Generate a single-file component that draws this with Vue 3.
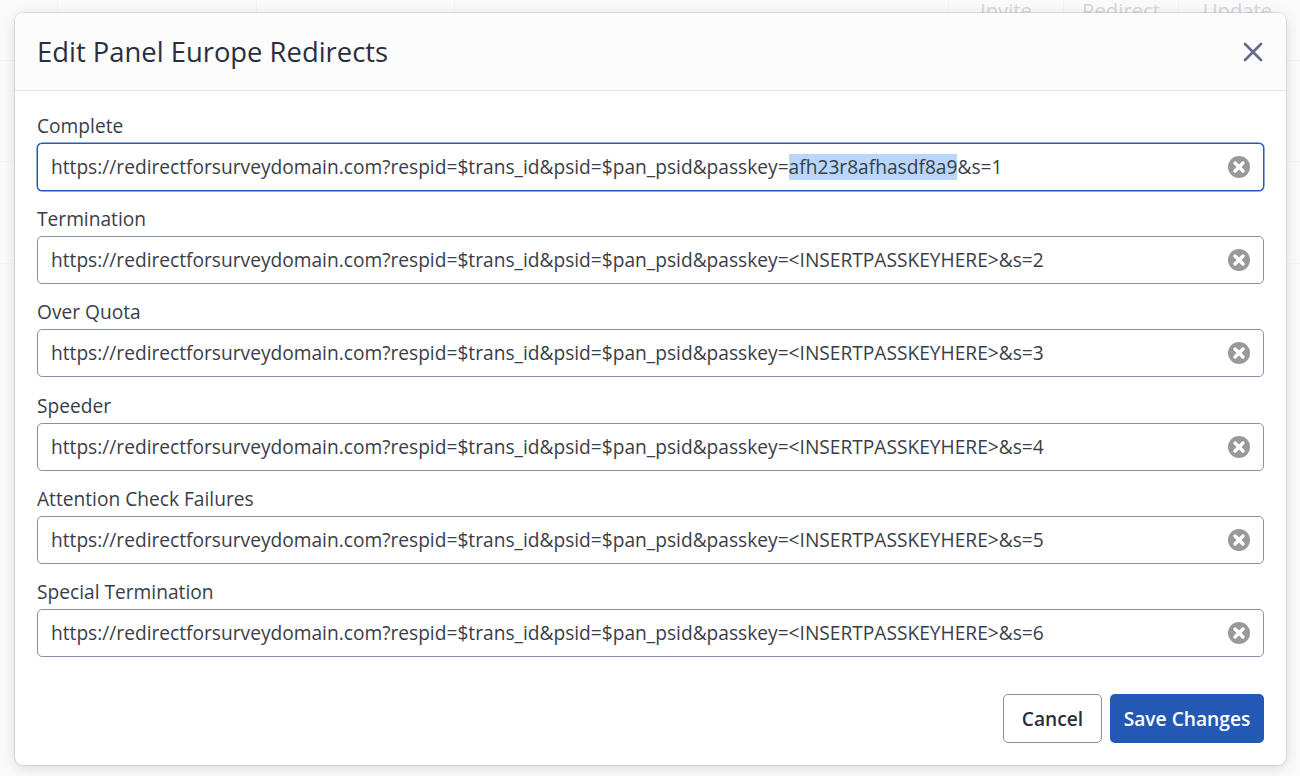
<template>
	<div class="page">
		<div class="page-bg">
			<div class="bg-row bg-row-head">
				<span class="bg-cell bg-first"></span>
				<span class="bg-cell bg-second"></span>
				<span class="bg-cell bg-third"></span>
				<span class="bg-cell bg-fill"></span>
				<span class="bg-cell bg-action">Invite</span>
				<span class="bg-cell bg-action">Redirect</span>
				<span class="bg-cell bg-last">Update</span>
			</div>
			<div class="bg-row bg-row-one"></div>
			<div class="bg-row bg-row-two"></div>
		</div>

		<div class="modal">
			<header class="modal-header">
				<h2 class="modal-title">Edit Panel Europe Redirects</h2>
				<button class="close-btn" type="button" aria-label="Close">
					<svg width="20" height="20" viewBox="0 0 20 20" fill="none">
						<path d="M2 2L18 18M18 2L2 18" stroke="#626b88" stroke-width="2.6" stroke-linecap="round" />
					</svg>
				</button>
			</header>

			<div class="modal-body">
				<div v-for="field in fields" :key="field.label" class="field">
					<label class="field-label">{{ field.label }}</label>
					<div class="field-input" :class="{ focused: field.selected }">
						<span class="field-value">{{ base }}<span v-if="field.selected" class="selected">{{ field.selected }}</span><template v-else>&lt;INSERTPASSKEYHERE&gt;</template>&amp;s={{ field.code }}</span>
						<svg class="clear-icon" width="22" height="22" viewBox="0 0 22 22">
							<circle cx="11" cy="11" r="11" fill="#999999" />
							<path d="M7 7L15 15M15 7L7 15" stroke="#ffffff" stroke-width="3.4" stroke-linecap="round" />
						</svg>
					</div>
				</div>
			</div>

			<footer class="modal-footer">
				<button class="btn btn-cancel" type="button">Cancel</button>
				<button class="btn btn-save" type="button">Save Changes</button>
			</footer>
		</div>
	</div>
</template>

<script setup>
const base = 'https://redirectforsurveydomain.com?respid=$trans_id&psid=$pan_psid&passkey=';

const fields = [
	{ label: 'Complete', code: 1, selected: 'afh23r8afhasdf8a9' },
	{ label: 'Termination', code: 2 },
	{ label: 'Over Quota', code: 3 },
	{ label: 'Speeder', code: 4 },
	{ label: 'Attention Check Failures', code: 5 },
	{ label: 'Special Termination', code: 6 },
];
</script>

<style>
html,
body {
	margin: 0;
	height: 100%;
	overflow: hidden;
}
</style>

<style scoped>
.page {
	position: relative;
	width: 1300px;
	height: 776px;
	overflow: hidden;
	background: #fafafb;
	font-family: 'Open Sans', 'Liberation Sans', sans-serif;
}

.bg-row {
	display: flex;
	border-bottom: 1px solid #f4f4f6;
}

.bg-row-head {
	height: 60px;
}

.bg-row-one {
	height: 100px;
}

.bg-row-two {
	height: 101px;
}

.bg-cell {
	flex: none;
	border-right: 1px solid #f4f4f6;
	box-sizing: border-box;
	color: #d6d7db;
	font-size: 20.3px;
	line-height: 20px;
	text-align: center;
}

.bg-first {
	width: 58px;
}

.bg-second {
	width: 199px;
}

.bg-third {
	width: 198px;
}

.bg-fill {
	width: 494px;
}

.bg-action {
	width: 115px;
}

.bg-last {
	width: 117px;
	border-right: 0;
}

.modal {
	position: absolute;
	top: 13px;
	left: 15px;
	width: 1271px;
	height: 752px;
	display: flex;
	flex-direction: column;
	background: #ffffff;
	border-radius: 8px;
	box-shadow: 0 0 0 1px rgba(0, 0, 0, 0.09), 0 3px 14px rgba(0, 0, 0, 0.13);
}

.modal-header {
	display: flex;
	align-items: center;
	justify-content: space-between;
	height: 77px;
	padding: 0 23px 0 22px;
	background: #fcfcfc;
	border-bottom: 1px solid #e6e6e6;
	border-radius: 8px 8px 0 0;
}

.modal-title {
	margin: 0;
	color: #2b2f3d;
	font-size: 27.4px;
	font-weight: 400;
}

.close-btn {
	display: flex;
	padding: 0;
	border: 0;
	background: none;
}

.modal-body {
	display: flex;
	flex-direction: column;
	gap: 16.2px;
	padding: 23px 22px 0;
}

.field {
	display: flex;
	flex-direction: column;
	gap: 5px;
}

.field-label {
	color: #3a3d48;
	font-size: 19.17px;
	line-height: 24px;
}

.field-input {
	display: flex;
	align-items: center;
	justify-content: space-between;
	box-sizing: border-box;
	height: 48px;
	padding: 0 13px;
	background: #ffffff;
	border: 1px solid #8a90aa;
	border-radius: 5px;
	color: #3a3d48;
	font-size: 19.17px;
}

.field-input.focused {
	border-color: #2359b5;
	box-shadow: 0 0 0 0.5px #2359b5;
}

.field-value {
	white-space: pre;
}

.selected {
	background: #b9d7fb;
}

.clear-icon {
	flex: none;
}

.modal-footer {
	display: flex;
	justify-content: flex-end;
	gap: 8px;
	margin-top: auto;
	padding: 0 22px 22px;
}

.btn {
	box-sizing: border-box;
	height: 49px;
	border-radius: 5px;
	font-family: inherit;
	font-size: 19.2px;
	font-weight: 600;
}

.btn-cancel {
	width: 99px;
	background: #ffffff;
	border: 1px solid #8a90aa;
	color: #2b2f3d;
}

.btn-save {
	width: 154px;
	background: #2359b5;
	border: 0;
	color: #ffffff;
}
</style>
